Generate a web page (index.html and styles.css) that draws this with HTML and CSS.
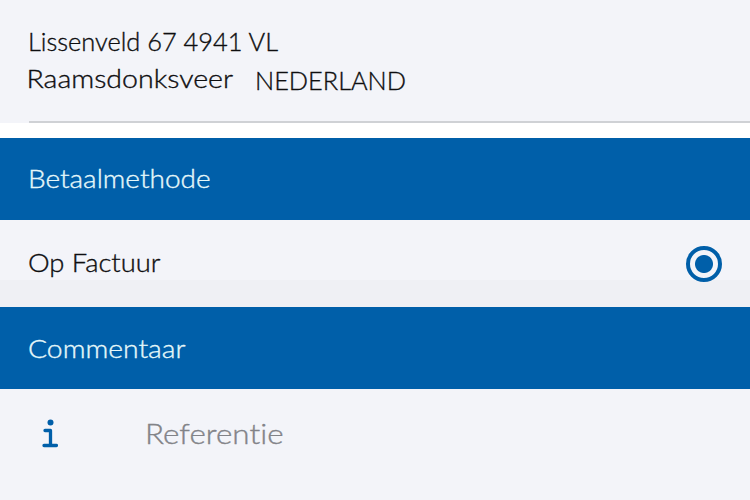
FILE: index.html
```html
<!DOCTYPE html>
<html lang="nl">
<head>
<meta charset="utf-8">
<title>Bestelling</title>
<link rel="stylesheet" href="styles.css">
</head>
<body>
<main class="page">
  <section class="address">
    <div class="line"><svg class="fit" width="251" height="32"><text x="-1" y="24" textLength="250" lengthAdjust="spacingAndGlyphs">Lissenveld 67 4941 VL</text></svg></div>
    <div class="city"><svg class="fit" width="206" height="32"><text x="-2.5" y="24" textLength="206.5" lengthAdjust="spacingAndGlyphs">Raamsdonksveer</text></svg><svg class="fit country" width="151" height="32"><text x="-1" y="24" textLength="151" lengthAdjust="spacingAndGlyphs">NEDERLAND</text></svg></div>
  </section>
  <h2 class="bar"><svg class="fit" width="182" height="32"><text x="-1" y="25" textLength="182.5" lengthAdjust="spacingAndGlyphs">Betaalmethode</text></svg></h2>
  <label class="option"><svg class="fit" width="132" height="32"><text x="-1" y="24" textLength="132.5" lengthAdjust="spacingAndGlyphs">Op Factuur</text></svg><span class="radio"></span></label>
  <h2 class="bar"><svg class="fit" width="157" height="32"><text x="-1" y="25.6" textLength="157.5" lengthAdjust="spacingAndGlyphs">Commentaar</text></svg></h2>
  <div class="field">
    <svg class="info" width="16" height="29" viewBox="0 0 16 29"><circle cx="8.5" cy="3.5" r="3"/><path d="M3 11.5h5.5v15M2 26.5h12.5"/></svg>
    <svg class="fit reference" width="139" height="36"><text x="-1" y="27" textLength="138.5" lengthAdjust="spacingAndGlyphs">Referentie</text></svg>
  </div>
</main>
</body>
</html>
```
FILE: styles.css
```css
* { box-sizing: border-box; }
body { margin: 0; background: #f3f4f9; color: #0e0e10; font: 300 25px Lato, sans-serif; font-variant-ligatures: none; }
.page { width: 750px; height: 500px; overflow: hidden; }
.address { height: 138px; padding: 27px 0 0 29px; border-bottom: 15px solid #fff; background: linear-gradient(#cfd1d5, #cfd1d5) 29px 100% / 100% 2px no-repeat; background-origin: padding-box; background-clip: padding-box; }
.fit { display: block; fill: currentColor; stroke: currentColor; stroke-width: .35px; overflow: visible; flex: none; }
.city { display: flex; padding-top: 5px; }
.country { margin: 2px 0 0 21px; }
.bar { height: 82px; margin: 0; padding-left: 29px; display: flex; align-items: center; background: #005fa9; color: #e6f8fa; font: inherit; }
.option { height: 87px; padding: 0 28px 0 29px; display: flex; align-items: center; justify-content: space-between; background: linear-gradient(#f3f4f9 60px, #eff0f4 60px); }
.radio { width: 36px; height: 36px; border: 4px solid #005fa9; border-radius: 50%; background: radial-gradient(circle, #005fa9 8.5px, transparent 9.5px); }
.field { height: 111px; display: flex; padding: 28px 0 0 42px; }
.info { margin-top: 2px; fill: #005fa9; }
.info path { fill: none; stroke: #005fa9; stroke-width: 3.3; stroke-linecap: round; stroke-linejoin: round; }
.reference { margin-left: 88px; color: #828388; font-size: 27.5px; }
```
